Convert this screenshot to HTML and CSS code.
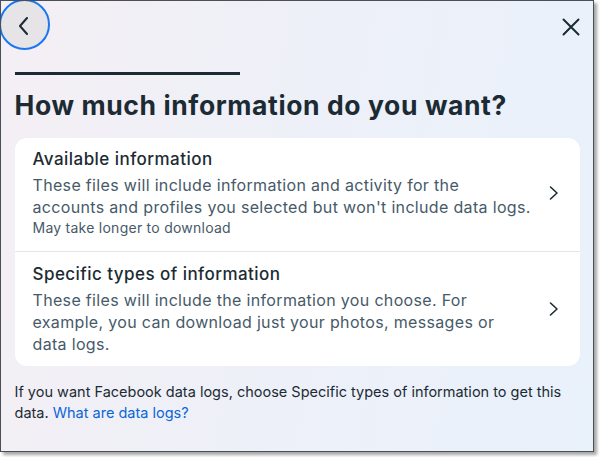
FILE: index.html
```html
<!DOCTYPE html>
<html>
<head>
<meta charset="utf-8">
<link rel="stylesheet" href="styles.css">
</head>
<body>
<div class="frame">
  <div class="header">
    <div class="back">
      <svg width="14" height="18" viewBox="0 0 14 18"><path d="M10 1 L3 9 L10 17" fill="none" stroke="#1c2b33" stroke-width="2" stroke-linecap="round" stroke-linejoin="round"/></svg>
    </div>
    <div class="close">
      <svg width="18" height="18" viewBox="0 0 18 18"><path d="M1.5 1.5 L16.5 16.5 M16.5 1.5 L1.5 16.5" fill="none" stroke="#1c2b33" stroke-width="2" stroke-linecap="round"/></svg>
    </div>
  </div>
  <div class="content">
    <div class="progress"></div>
    <h1 class="title">How much information do you want?</h1>
    <div class="card">
      <div class="option first">
        <div class="text">
          <div class="opt-title">Available information</div>
          <div class="opt-desc">These files will include information and activity for the accounts and profiles you selected but won't include data logs.</div>
          <div class="opt-note">May take longer to download</div>
        </div>
        <svg class="chev" width="10" height="16" viewBox="0 0 10 16"><path d="M1.5 2 L8 8 L1.5 14" fill="none" stroke="#1c2b33" stroke-width="1.6" stroke-linecap="round" stroke-linejoin="round"/></svg>
      </div>
      <div class="option second">
        <div class="text">
          <div class="opt-title">Specific types of information</div>
          <div class="opt-desc">These files will include the information you choose. For example, you can download just your photos, messages or data logs.</div>
        </div>
        <svg class="chev" width="10" height="16" viewBox="0 0 10 16"><path d="M1.5 2 L8 8 L1.5 14" fill="none" stroke="#1c2b33" stroke-width="1.6" stroke-linecap="round" stroke-linejoin="round"/></svg>
      </div>
    </div>
    <p class="footer">If you want Facebook data logs, choose Specific types of information to get this data. <a href="#" class="link">What are data logs?</a></p>
  </div>
</div>
</body>
</html>
```
FILE: styles.css
```css
html, body {
  margin: 0;
  padding: 0;
  background: #ffffff;
}
body {
  width: 600px;
  height: 457px;
  font-family: Inter, "Noto Sans", sans-serif;
  color: #1c2b33;
}
.frame {
  box-sizing: border-box;
  width: 594px;
  height: 452px;
  border: 1.5px solid #4a4f55;
  box-shadow: 3px 3px 3px rgba(0,0,0,0.35);
  background: linear-gradient(100deg, #f4eff4 0%, #eef0f8 45%, #e9f1fb 100%);
  overflow: hidden;
}
.header {
  display: flex;
  justify-content: space-between;
  align-items: flex-start;
  height: 48px;
}
.back {
  box-sizing: border-box;
  width: 51px;
  height: 51px;
  margin: -2px 0 0 -2px;
  border-radius: 50%;
  background: #e6e4e6;
  border: 2px solid #1877f2;
  display: flex;
  align-items: center;
  justify-content: center;
}
.back svg { margin: 3px 0 0 -2px; }
.close {
  width: 18px;
  height: 18px;
  margin: 17px 13px 0 0;
}
.close svg { display: block; }
.content {
  padding: 23px 13px 0 13.5px;
}
.progress {
  width: 225px;
  height: 3px;
  background: #1c2b33;
}
.title {
  margin: 14px 0 0 0;
  font-size: 26.5px;
  line-height: 32px;
  font-weight: 700;
  letter-spacing: 0.6px;
}
.card {
  margin-top: 17px;
  background: #ffffff;
  border-radius: 12px;
  overflow: hidden;
}
.option {
  display: flex;
  align-items: center;
  padding: 0 21px 0 18px;
}
.option.first {
  border-bottom: 1px solid #e4e6ea;
  padding-top: 10px;
  padding-bottom: 13.5px;
}
.option.second {
  padding-top: 11px;
  padding-bottom: 11.5px;
}
.text { flex: 1; min-width: 0; }
.chev { flex: none; margin-left: 17px; }
.opt-title {
  font-size: 17px;
  line-height: 22px;
  font-weight: 500;
  letter-spacing: 0.45px;
}
.opt-desc {
  margin-top: 3.5px;
  font-size: 16px;
  line-height: 22px;
  color: #465a69;
  letter-spacing: 0.33px;
}
.opt-note {
  font-size: 14px;
  line-height: 20px;
  color: #465a69;
  letter-spacing: 0.25px;
}
.footer {
  margin: 15px 0 0 0;
  font-size: 14.5px;
  line-height: 21px;
  color: #1c2b33;
  letter-spacing: 0;
}
.link {
  color: #0a66d8;
  text-decoration: none;
}
```
